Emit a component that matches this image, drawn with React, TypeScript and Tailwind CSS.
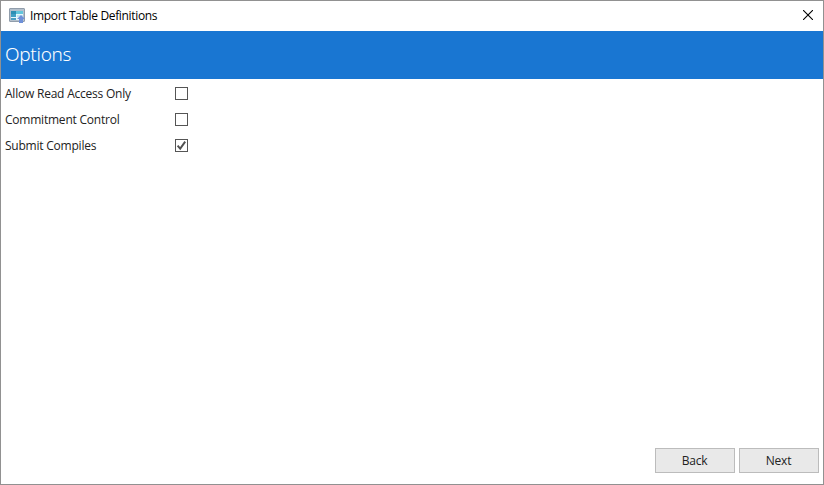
import type { ReactNode } from "react";

const options = [
  { id: "read-access", label: "Allow Read Access Only", checked: false },
  { id: "commitment", label: "Commitment Control", checked: false },
  { id: "compiles", label: "Submit Compiles", checked: true },
];

function AppIcon() {
  return (
    <svg width="16" height="16" viewBox="0 0 16 16" className="block">
      <rect x="0.5" y="0.5" width="15" height="13" rx="0.5" fill="#b4c0cc" stroke="#909dab" />
      <rect x="2" y="3" width="12" height="9" fill="#e8f7fb" />
      <rect x="2" y="3" width="5" height="3" fill="#2d8fb4" />
      <rect x="7" y="3" width="7" height="3" fill="#62c6dc" />
      <rect x="2" y="6" width="5" height="3" fill="#3f9fc4" />
      <rect x="8" y="7" width="6" height="2" fill="#bfe6f1" />
      <rect x="2" y="10" width="5" height="2" fill="#4d9fc2" />
      <path d="M12 7 L16 11 H14 V15 H10 V11 H8 Z" fill="#6e90d8" />
    </svg>
  );
}

function Checkbox({ checked }: { checked: boolean }) {
  return (
    <span
      role="checkbox"
      aria-checked={checked}
      className="block size-[13px] border border-[#555555] bg-white"
    >
      {checked && (
        <svg width="11" height="11" viewBox="0 0 11 11" className="block">
          <path d="M1.6 5.6 L4.2 8.6 L9.2 1.6" fill="none" stroke="#505050" strokeWidth="1.9" />
        </svg>
      )}
    </span>
  );
}

function Button({ children }: { children: ReactNode }) {
  return (
    <button className="h-[25px] w-20 border border-[#bcbcbc] bg-[#e9e9e9] pr-px text-[12px] leading-[23px] tracking-[-0.2px] text-[#222222]">
      {children}
    </button>
  );
}

export default function App() {
  return (
    <div className="flex h-[485px] w-[824px] flex-col border border-[#919191] bg-white font-['Open_Sans',sans-serif] text-[12px] text-[#222222]">
      <header className="flex h-[30px] shrink-0 items-center pr-2.5 pl-2">
        <AppIcon />
        <h1 className="ml-[5px] flex-1 text-[12px] leading-4 tracking-[-0.34px] text-black">
          Import Table Definitions
        </h1>
        <button aria-label="Close" className="mb-[3px]">
          <svg width="10" height="10" viewBox="0 0 10 10" className="block">
            <path d="M0 0 L10 10 M10 0 L0 10" stroke="#000000" strokeWidth="1.1" />
          </svg>
        </button>
      </header>

      <div className="flex h-12 shrink-0 items-center bg-[#1976d2] pb-0.5 pl-1">
        <h2 className="font-['Noto_Sans','Open_Sans',sans-serif] text-[19px] font-light tracking-[-0.3px] text-white">
          Options
        </h2>
      </div>

      <main className="flex-1 pt-0.5">
        {options.map((option) => (
          <div key={option.id} className="flex h-[26px] items-center pl-1">
            <span className="w-[170px] tracking-[-0.22px]">{option.label}</span>
            <div className="pb-px">
              <Checkbox checked={option.checked} />
            </div>
          </div>
        ))}
      </main>

      <footer className="flex justify-end gap-1 pr-1 pb-[11px]">
        <Button>Back</Button>
        <Button>Next</Button>
      </footer>
    </div>
  );
}
